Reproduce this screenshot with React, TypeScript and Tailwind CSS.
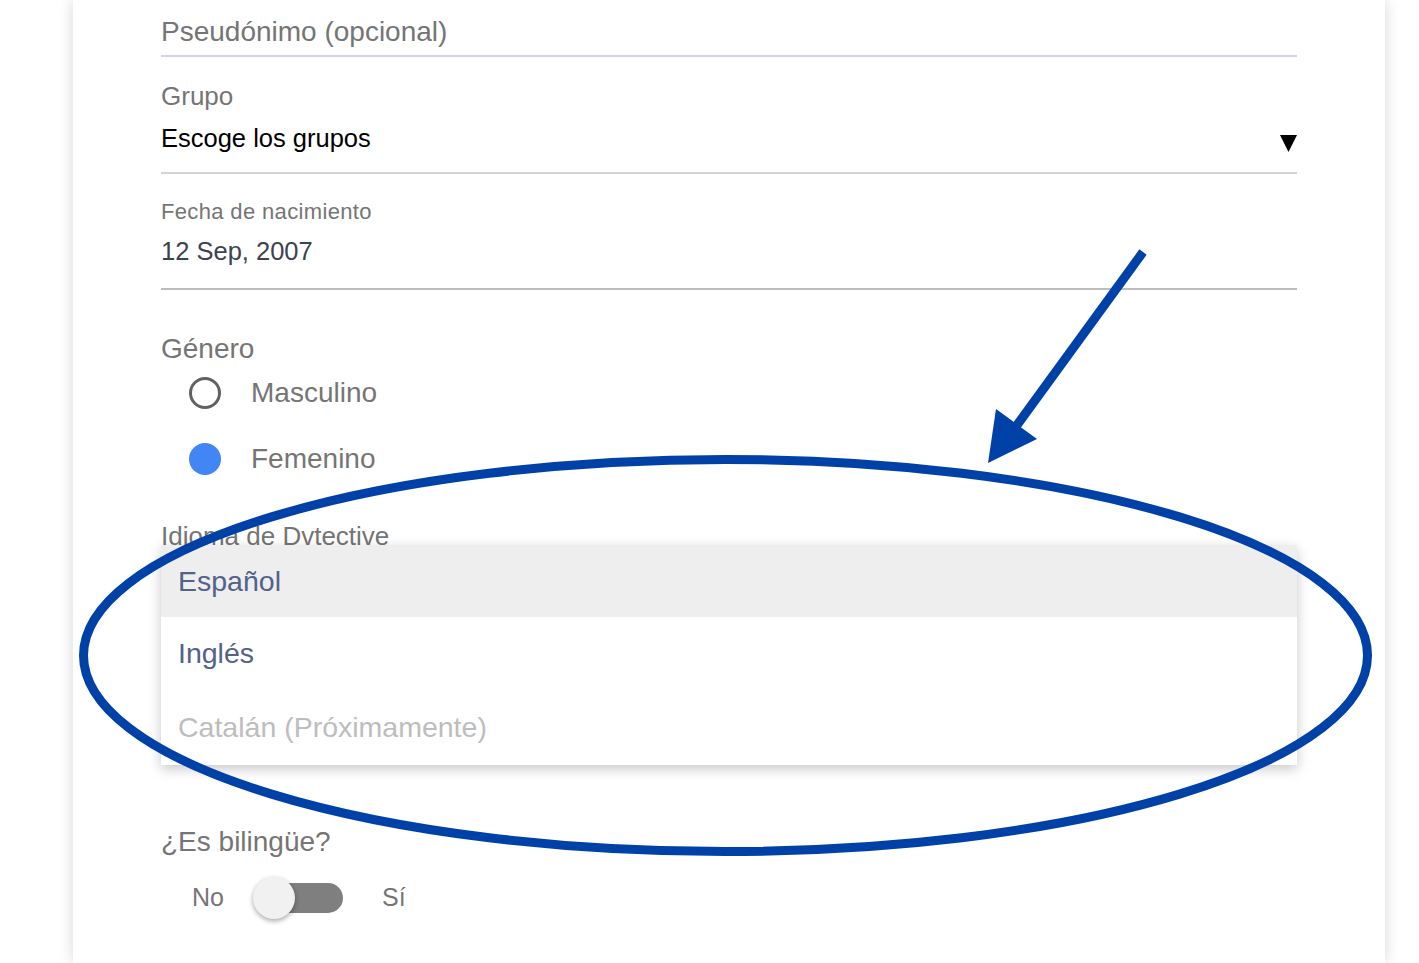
import React from "react";

const gray = "text-[#757575]";

export default function App() {
  return (
    <div
      className="relative w-full h-[963px] bg-white overflow-hidden"
      style={{ fontFamily: '"Liberation Sans", Arial, sans-serif' }}
    >
      <div className="ml-[73px] w-[1312px] h-full bg-white shadow-[0_0_14px_rgba(0,0,0,0.16)] px-[88px]">
        {/* Pseudónimo */}
        <div className="pt-[17px] pb-[8px] border-b-2 border-[#d0d4dc]">
          <div className={`text-[28px] leading-[30px] ${gray}`}>Pseudónimo (opcional)</div>
        </div>

        {/* Grupo */}
        <div className="mt-[24px] pb-[19px] border-b-2 border-[#d0d4dc]">
          <div className={`text-[26px] leading-[30px] ${gray}`}>Grupo</div>
          <div className="mt-[12px] flex items-center justify-between">
            <div className="text-[25.5px] leading-[30px] text-black">Escoge los grupos</div>
            <svg width="17" height="17" viewBox="0 0 17 17" className="mt-[10px]">
              <polygon points="0,0 17,0 8.5,17" fill="#000" />
            </svg>
          </div>
        </div>

        {/* Fecha */}
        <div className="mt-[26px] pb-[22px] border-b-2 border-[#bdbdbd]">
          <div className={`text-[22px] leading-[24px] tracking-[0.35px] ${gray}`}>Fecha de nacimiento</div>
          <div className="mt-[12px] text-[25.5px] leading-[30px] text-[#3b4250]">12 Sep, 2007</div>
        </div>

        {/* Género */}
        <div className="mt-[44px]">
          <div className={`text-[28px] leading-[30px] ${gray}`}>Género</div>
          <div className="mt-[9px] flex flex-col gap-[26px]">
            <div className="flex items-center h-[40px] ml-[28px]">
              <div className="w-[32px] h-[32px] rounded-full border-[3px] border-[#616161]" />
              <span className={`ml-[30px] text-[28px] leading-[30px] ${gray}`}>Masculino</span>
            </div>
            <div className="flex items-center h-[40px] ml-[28px]">
              <div className="w-[32px] h-[32px] rounded-full bg-[#4285f4]" />
              <span className={`ml-[30px] text-[28px] leading-[30px] ${gray}`}>Femenino</span>
            </div>
          </div>
        </div>

        {/* Idioma */}
        <div className="mt-[42px]">
          <div className={`text-[26px] leading-[30px] ${gray}`}>Idioma de Dvtective</div>
          <div className="relative h-[276px]">
            <div className="absolute left-0 right-0 top-[-6px] bg-white shadow-[0_4px_12px_rgba(0,0,0,0.22)] z-10">
              <div className="h-[72px] bg-[#eeeeee] flex items-center px-[17px] text-[28.5px] text-[#52628a]">Español</div>
              <div className="h-[73px] flex items-center px-[17px] text-[28.5px] text-[#52628a]">Inglés</div>
              <div className="h-[75px] flex items-center px-[17px] text-[28.5px] text-[#bdbdbd]">Catalán (Próximamente)</div>
            </div>
          </div>
        </div>

        {/* Bilingüe */}
        <div>
          <div className={`text-[28px] leading-[30px] ${gray}`}>¿Es bilingüe?</div>
          <div className="mt-[20px] flex items-center h-[42px] ml-[31px]">
            <span className={`text-[25px] ${gray}`}>No</span>
            <div className="relative ml-[29px] w-[90px] h-[42px] flex items-center">
              <div className="absolute left-[10px] right-0 h-[30px] rounded-full bg-[#7f7f7f]" />
              <div className="absolute left-0 w-[42px] h-[42px] rounded-full bg-[#f1f1f1] shadow-[0_2px_5px_rgba(0,0,0,0.35)]" />
            </div>
            <span className={`ml-[39px] text-[25px] ${gray}`}>Sí</span>
          </div>
        </div>
      </div>

      {/* Annotation overlay */}
      <svg
        className="absolute inset-0 z-20 pointer-events-none"
        width="1419"
        height="963"
        viewBox="0 0 1419 963"
      >
        <ellipse cx="725.5" cy="655.5" rx="642" ry="196" fill="none" stroke="#0041a8" strokeWidth="9" />
        <line x1="1143" y1="252" x2="1012" y2="432" stroke="#0041a8" strokeWidth="9" />
        <polygon points="988,463 996,409 1037,439" fill="#0041a8" />
      </svg>
    </div>
  );
}
